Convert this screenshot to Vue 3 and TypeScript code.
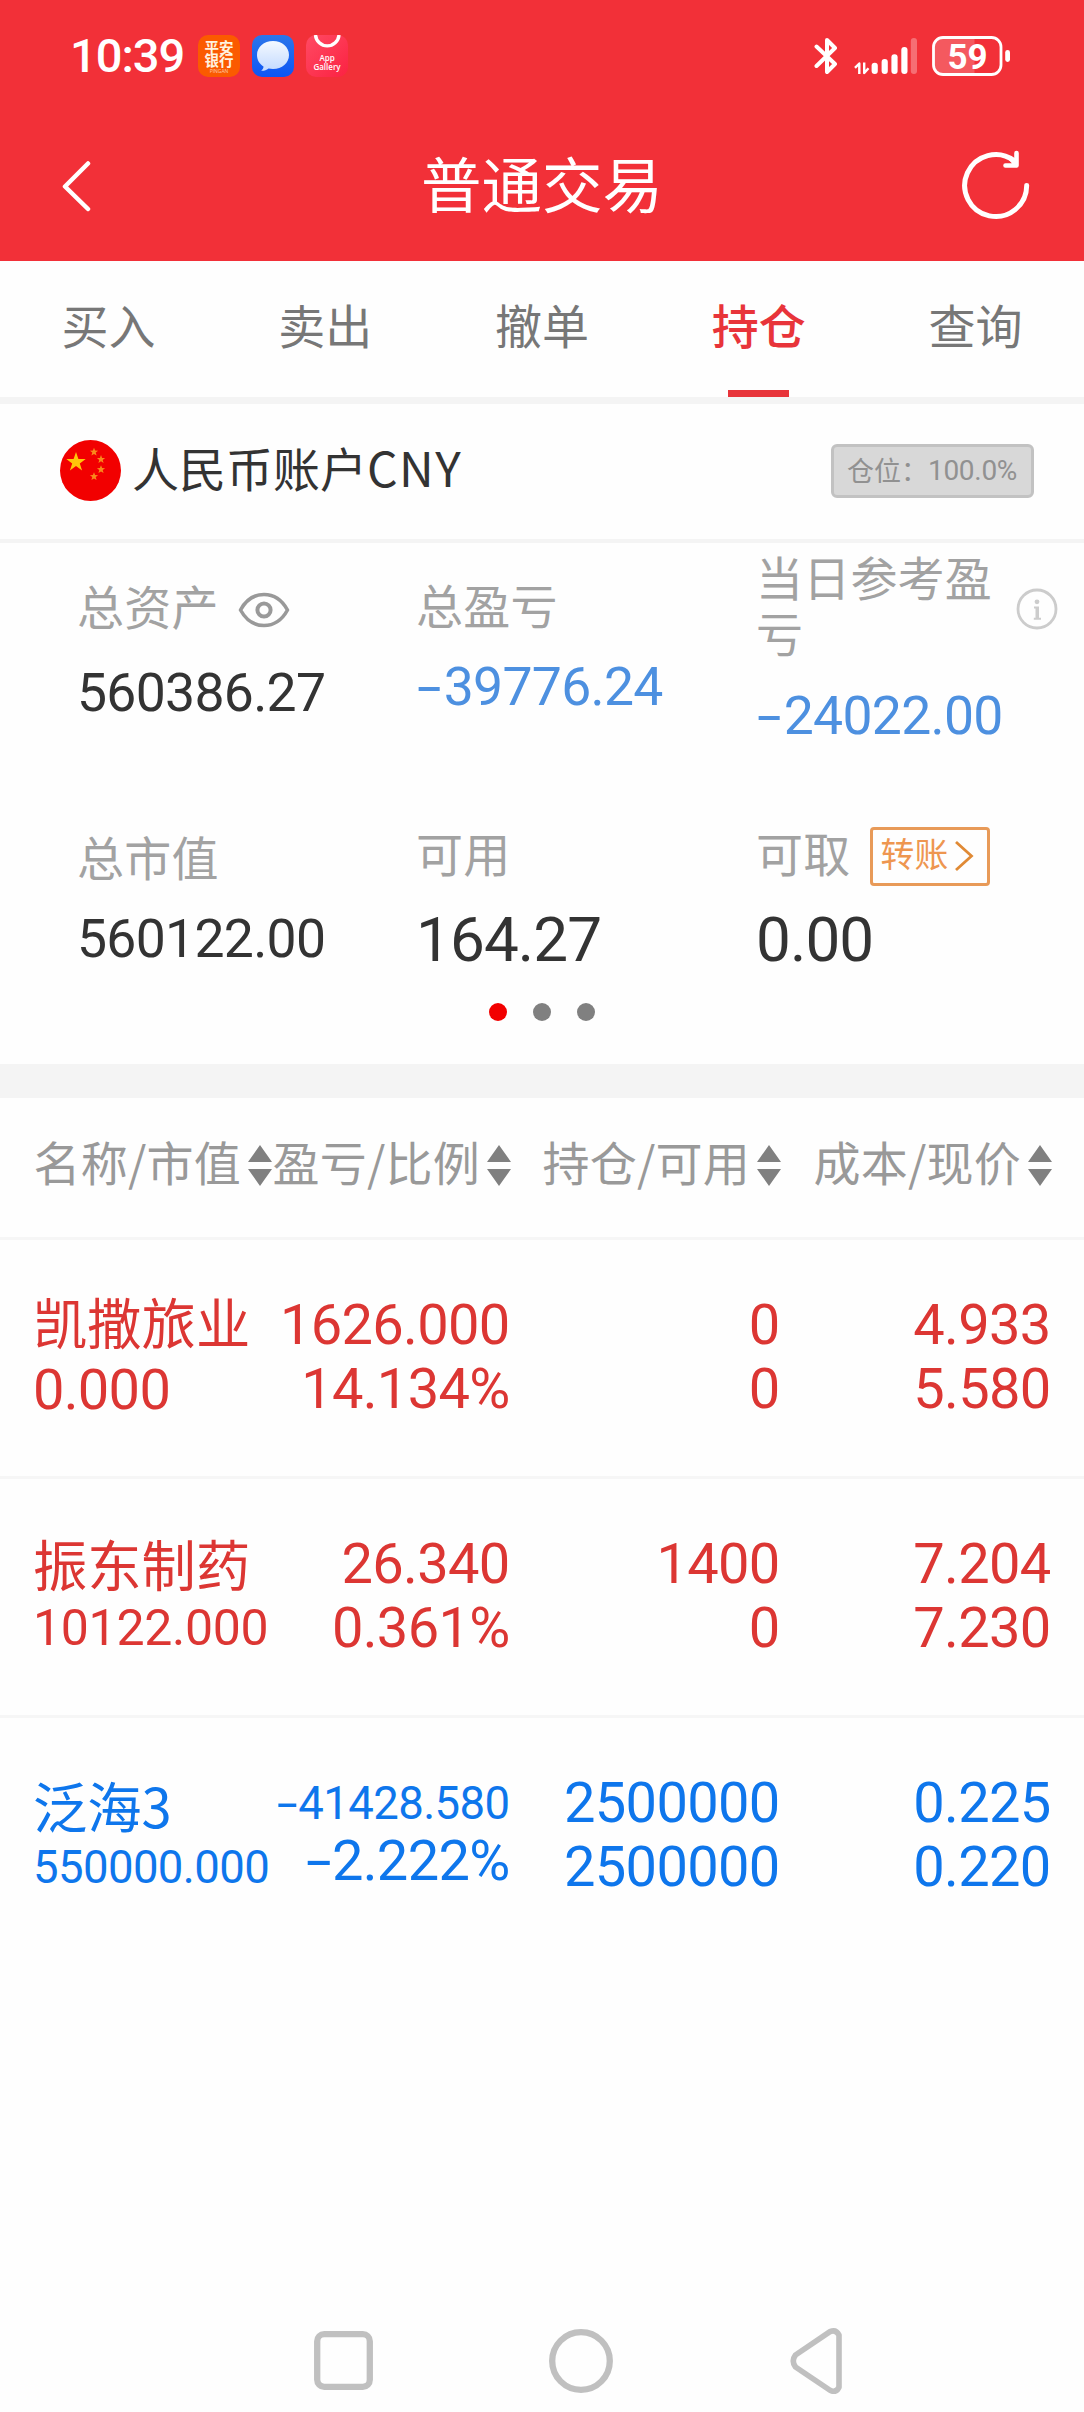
<script setup lang="ts">
interface Cell {
  text: string
  size: 'lg' | 'md' | 'sm'
}
interface Holding {
  name: string
  tone: 'up' | 'down'
  value: Cell
  pairs: [Cell, Cell][]
}

const tabs: string[] = ['买入', '卖出', '撤单', '持仓', '查询']
const activeTab = '持仓'
const columns: string[] = ['名称/市值', '盈亏/比例', '持仓/可用', '成本/现价']

const c = (text: string, size: Cell['size'] = 'lg'): Cell => ({ text, size })

const holdings: Holding[] = [
  {
    name: '凯撒旅业',
    tone: 'up',
    value: c('0.000'),
    pairs: [
      [c('1626.000'), c('14.134%')],
      [c('0'), c('0')],
      [c('4.933'), c('5.580')],
    ],
  },
  {
    name: '振东制药',
    tone: 'up',
    value: c('10122.000', 'md'),
    pairs: [
      [c('26.340'), c('0.361%')],
      [c('1400'), c('0')],
      [c('7.204'), c('7.230')],
    ],
  },
  {
    name: '泛海3',
    tone: 'down',
    value: c('550000.000', 'sm'),
    pairs: [
      [c('-41428.580', 'sm'), c('-2.222%')],
      [c('2500000'), c('2500000')],
      [c('0.225'), c('0.220')],
    ],
  },
]

const signal = [
  { x: 17.6, y: 25.7, o: 1 },
  { x: 27.6, y: 22, o: 1 },
  { x: 37.4, y: 17.3, o: 1 },
  { x: 47.3, y: 10, o: 1 },
  { x: 56.8, y: 1, o: 0.3 },
]

const isNegative = (t: string): boolean => t.startsWith('-')
const digits = (t: string): string => t.replace('-', '')
</script>

<template>
  <div class="screen">
    <header class="top">
      <div class="status">
        <span class="time">10:39</span>
        <svg class="app" width="42" height="42" viewBox="0 0 42 42">
          <rect width="42" height="42" rx="10" fill="#fb5a00" />
          <g fill="#fff3e0" text-anchor="middle">
            <text class="bank" x="21" y="17.500">平安</text>
            <text class="bank" x="21" y="31.300">银行</text>
            <text class="pinyin" x="21" y="38">PINGAN</text>
          </g>
        </svg>
        <svg class="app" width="42" height="42" viewBox="0 0 42 42">
          <defs>
            <linearGradient id="msg" x1="0" y1="0" x2="0" y2="1">
              <stop offset="0" stop-color="#2b76ea" />
              <stop offset="1" stop-color="#0d55f4" />
            </linearGradient>
            <linearGradient id="bubble" x1="0" y1="0" x2="0" y2="1">
              <stop offset="0" stop-color="#f4f9ff" />
              <stop offset="1" stop-color="#c3daff" />
            </linearGradient>
          </defs>
          <rect width="42" height="42" rx="10" fill="url(#msg)" />
          <path d="M21 6C12 6 5 12 5 20c0 5 2.500 9 6.500 11.500 0 1.800-.8 3-2.300 4.300 3 .2 5.200-.8 7.300-2.300 1.400.3 3 .5 4.500.5 9 0 16-6 16-14S30 6 21 6z" fill="url(#bubble)" />
        </svg>
        <svg class="app" width="42" height="42" viewBox="0 0 42 42">
          <defs>
            <linearGradient id="gallery" x1="0" y1="0" x2="1" y2="1">
              <stop offset="0" stop-color="#ff4a63" />
              <stop offset="1" stop-color="#fb2242" />
            </linearGradient>
          </defs>
          <rect width="42" height="42" rx="10" fill="url(#gallery)" />
          <path d="M9.500 0a11.800 12 0 0 0 23.500 0" fill="none" stroke="#fff" stroke-width="3.400" />
          <g fill="#fff" text-anchor="middle">
            <text class="gallery" x="21" y="26">App</text>
            <text class="gallery" x="21" y="35">Gallery</text>
          </g>
        </svg>
        <div class="system">
          <svg width="24" height="38" viewBox="0 0 24 38">
            <path d="M2.500 9.500 21 27 13 35V3l8 8L2.500 29" fill="none" stroke="#fff" stroke-width="4" stroke-linejoin="round" stroke-linecap="round" />
          </svg>
          <svg class="signal" width="64" height="38" viewBox="0 0 64 38">
            <path d="M5.300 37V26.500L1 30.800" fill="none" stroke="#fff" stroke-width="2.400" stroke-linejoin="round" />
            <path d="M10.200 25.500V36l4.300-4.800" fill="none" stroke="#fff" stroke-width="2.400" stroke-linejoin="round" />
            <rect v-for="b in signal" :key="b.x" :x="b.x" :y="b.y" width="6.200" :height="37 - b.y" rx="3" fill="#fff" :fill-opacity="b.o" />
          </svg>
          <svg class="battery" width="79" height="40" viewBox="0 0 79 40">
            <path d="M11 2h31.500v36H11a9.500 9.500 0 0 1-9.500-9.500v-17A9.500 9.500 0 0 1 11 2z" fill="#fff" fill-opacity=".2" />
            <rect x="1.500" y="1.500" width="67.500" height="37" rx="9.500" fill="none" stroke="#fff" stroke-width="2.800" />
            <rect x="73.200" y="14" width="4.800" height="12" rx="2.400" fill="#fff" />
            <text class="level" x="35.500" y="32.600" text-anchor="middle" fill="#fff">59</text>
          </svg>
        </div>
      </div>
      <div class="navbar">
        <svg class="back" width="30" height="52" viewBox="0 0 30 52">
          <path d="M27 3.500 4 26.500 27 49" fill="none" stroke="#fff" stroke-width="4.500" stroke-linecap="round" stroke-linejoin="round" />
        </svg>
        <h1>普通交易</h1>
        <svg class="refresh" width="68" height="70" viewBox="0 0 68 70">
          <path d="M64.700 35.500A31 31 0 1 1 52 10.500" fill="none" stroke="#fff" stroke-width="5" stroke-linecap="round" />
          <path d="M54.500 3v12.500H43.500M49 9l5 5.500" fill="none" stroke="#fff" stroke-width="4.600" stroke-linecap="round" stroke-linejoin="round" />
        </svg>
      </div>
    </header>

    <nav class="tabs">
      <div v-for="t in tabs" :key="t" class="tab" :class="{ active: t === activeTab }">{{ t }}</div>
    </nav>

    <section class="account">
      <svg width="61" height="61" viewBox="0 0 61 61">
        <circle cx="30.500" cy="30.500" r="30.500" fill="#f20000" />
        <path d="M16 12l2.400 7h7.300l-5.900 4.400 2.300 7.100-6.100-4.400-6.100 4.400 2.300-7.100L6.300 19h7.300z" fill="#ffc60a" />
        <g fill="#f98a1c">
          <path id="star" d="M34 7.800l1.100 2.800 3 .1-2.400 1.900.9 3-2.600-1.700-2.600 1.700.9-3-2.400-1.900 3-.1z" />
          <use href="#star" x="7" y="7.300" />
          <use href="#star" x="7" y="17.500" />
          <use href="#star" y="24.500" />
        </g>
      </svg>
      <span class="account-name">人民币账户<span class="code">CNY</span></span>
      <div class="position"><span>仓位：</span><b>100.0%</b></div>
    </section>

    <section class="summary">
      <div class="sum-row">
        <div class="cell first">
          <div class="label">总资产
            <svg class="eye" width="52" height="36" viewBox="0 0 52 36">
              <path d="M2.500 18C8 8 16 2.500 26 2.500S44 8 49.500 18C44 28 36 33.500 26 33.500S8 28 2.500 18z" fill="none" stroke="#999" stroke-width="3.600" stroke-linejoin="round" />
              <circle cx="26" cy="18" r="6.600" fill="none" stroke="#999" stroke-width="4" />
            </svg>
          </div>
          <div class="amount">560386.27</div>
        </div>
        <div class="cell">
          <div class="label">总盈亏</div>
          <div class="amount blue"><i class="minus">-</i>39776.24</div>
        </div>
        <div class="cell">
          <div class="label today">
            <span>当日参考盈亏</span>
            <svg class="info" width="42" height="42" viewBox="0 0 42 42">
              <circle cx="21" cy="21" r="19" fill="none" stroke="#ccc" stroke-width="2.800" />
              <circle cx="21" cy="13.800" r="2.400" fill="#ccc" />
              <path d="M18 18.500h5v11.300h2v1.900h-7.200v-1.900h1.700v-9.400H18z" fill="#ccc" />
            </svg>
          </div>
          <div class="amount blue"><i class="minus">-</i>24022.00</div>
        </div>
      </div>
      <div class="sum-row second">
        <div class="cell">
          <div class="label low">总市值</div>
          <div class="amount">560122.00</div>
        </div>
        <div class="cell">
          <div class="label">可用</div>
          <div class="amount big">164.27</div>
        </div>
        <div class="cell">
          <div class="label">可取
            <span class="transfer">转账
              <svg width="20" height="32" viewBox="0 0 20 32">
                <path d="M2 2l15.500 14L2 30" fill="none" stroke="#e08a35" stroke-width="2.800" />
              </svg>
            </span>
          </div>
          <div class="amount big">0.00</div>
        </div>
      </div>
      <div class="dots"><i class="on"></i><i></i><i></i></div>
    </section>

    <section class="table">
      <div class="thead">
        <div v-for="h in columns" :key="h" class="th">
          <span>{{ h }}</span>
          <svg width="24" height="41" viewBox="0 0 24 41">
            <path d="M12 0l12 17H0zM12 41L0 24h24z" fill="#808080" />
          </svg>
        </div>
      </div>
      <div v-for="h in holdings" :key="h.name" class="row" :class="h.tone">
        <div class="td left">
          <div class="name">{{ h.name }}</div>
          <div :class="h.value.size">{{ h.value.text }}</div>
        </div>
        <div v-for="(p, i) in h.pairs" :key="i" class="td">
          <div v-for="(v, j) in p" :key="j" :class="v.size"><i v-if="isNegative(v.text)" class="minus">-</i>{{ digits(v.text) }}</div>
        </div>
      </div>
    </section>

    <footer class="keys">
      <svg width="530" height="68" viewBox="0 0 530 68" fill="none" stroke="#c0c0c0" stroke-width="6.300">
        <rect x="4.200" y="8.200" width="52.600" height="52.600" rx="7" />
        <circle cx="268" cy="35" r="28.800" />
        <path d="M517 5.600 482.500 29q-4.500 6 0 12L517 64.300q6 3 9-3V9q-3-6-9-3.400z" stroke-width="5.600" stroke-linejoin="round" />
      </svg>
    </footer>
  </div>
</template>

<style>
body {
  margin: 0;
  background: #fefefe;
}
</style>

<style scoped>
.screen {
  width: 1084px;
  height: 2412px;
  display: flex;
  flex-direction: column;
  background: #fefefe;
  color: #333;
  font-family: 'Noto Sans CJK SC', sans-serif;
  overflow: hidden;
}
.top {
  height: 261px;
  background: #f23038;
  color: #fff;
}
.status {
  height: 112px;
  display: flex;
  align-items: center;
  padding: 0 73px 0 70px;
  box-sizing: border-box;
}
.time {
  width: 116px;
  margin-right: 12px;
  font: 500 47px/60px Roboto, sans-serif;
  letter-spacing: -1px;
  white-space: nowrap;
}
.app {
  margin-right: 12px;
}
.bank {
  font: 700 14.500px 'Noto Sans CJK SC', sans-serif;
}
.pinyin {
  font: 5px 'Open Sans', sans-serif;
  opacity: 0.7;
}
.gallery {
  font: 600 8px 'Open Sans', sans-serif;
}
.level {
  font: 700 35px Roboto, sans-serif;
}
.system {
  display: flex;
  align-items: center;
  margin-left: auto;
}
.signal {
  margin: 0 14px 0 16px;
}
.navbar {
  height: 149px;
  display: grid;
  grid-template-columns: 360px 242px 1fr;
  align-items: center;
  padding: 0 54px 0 61px;
}
h1 {
  margin: 0 0 10px;
  font-weight: 400;
  font-size: 60.500px;
  line-height: 88px;
  white-space: nowrap;
}
.refresh {
  width: 68px;
  justify-self: end;
  margin-bottom: 4px;
}
.back {
  margin-bottom: 1px;
}
.tabs {
  height: 136px;
  display: flex;
  border-bottom: 7px solid #f4f4f4;
}
.tab {
  flex: 1;
  display: flex;
  flex-direction: column;
  align-items: center;
  height: 136px;
  line-height: 126px;
  font-size: 47px;
  color: #777;
}
.tab.active {
  color: #e8343a;
  font-weight: 500;
}
.tab.active::after {
  content: '';
  width: 61px;
  height: 7px;
  margin-top: 3px;
  background: #e8343a;
}
.account {
  height: 135px;
  display: flex;
  align-items: center;
  padding: 0 50px 0 60px;
  border-bottom: 4px solid #f4f4f4;
}
.account > svg {
  margin-bottom: 2px;
}
.account-name {
  margin: 0 auto 10px 11px;
  font-size: 47px;
  line-height: 60px;
}
.code {
  font-size: 48px;
  letter-spacing: 1.5px;
}
.position {
  width: 203px;
  height: 54px;
  box-sizing: border-box;
  border: 3px solid #c2c2c2;
  border-radius: 6px;
  background: #d8d8d8;
  color: #919191;
  display: flex;
  align-items: center;
  padding-left: 13px;
  margin-bottom: 1px;
  font-size: 27px;
  line-height: 44px;
}
.position span {
  margin-bottom: 3px;
}
.position b {
  font: 400 28px/44px Roboto, sans-serif;
  letter-spacing: -0.3px;
  margin-bottom: 1px;
}
.summary {
  height: 521px;
  border-bottom: 34px solid #f4f4f4;
}
.sum-row {
  height: 206px;
  display: grid;
  grid-template-columns: 339px 340px 1fr;
  align-items: center;
  padding-left: 77px;
}
.sum-row.second {
  margin-top: 45px;
}
.cell {
  padding-top: 1px;
}
.cell.first {
  padding-top: 8px;
}
.first .amount {
  margin-top: 30px;
}
.label {
  display: flex;
  align-items: center;
  height: 56px;
  line-height: 56.500px;
  font-size: 47px;
  letter-spacing: 0.2px;
  color: #a2a2a2;
}
.label.low {
  padding-top: 2px;
}
.today {
  height: 113px;
}
.today span {
  width: 237px;
}
.info {
  margin-left: 23px;
  margin-top: 9px;
}
.eye {
  margin-left: 19px;
  margin-top: 10px;
}
.amount {
  margin-top: 25px;
  height: 60px;
  font: 400 53.500px/60px Roboto, sans-serif;
  letter-spacing: -0.7px;
  white-space: nowrap;
}
.amount.big {
  margin-top: 30px;
  font-size: 62px;
  letter-spacing: -0.9px;
}
.second .label:not(.low) {
  margin-top: -1px;
}
.blue {
  color: #4d90e0;
  padding-left: 1px;
}
.minus {
  display: inline-block;
  font-style: normal;
  width: 0.5em;
  text-align: left;
  transform: scaleX(1.65);
  transform-origin: left center;
}
.td .minus {
  width: 0.47em;
}
.transfer {
  display: flex;
  align-items: center;
  justify-content: space-between;
  box-sizing: border-box;
  width: 120px;
  height: 59px;
  margin: 8px 0 0 20px;
  padding: 0 13px 6px 7px;
  border: 3px solid #e89a58;
  border-radius: 4px;
  color: #ee9650;
  font-size: 33.800px;
  line-height: 50px;
}
.transfer svg {
  margin-top: 5px;
}
.dots {
  display: flex;
  justify-content: center;
  gap: 26px;
  margin-top: 3px;
}
.dots i {
  width: 18px;
  height: 18px;
  border-radius: 50%;
  background: #808080;
}
.dots .on {
  background: #f20000;
}
.thead,
.row {
  display: grid;
  grid-template-columns: 239px 239px 270px 271px;
  padding: 0 32px 0 33px;
  border-bottom: 3px solid #f6f6f6;
}
.thead {
  height: 139px;
}
.th {
  display: flex;
  align-items: center;
  justify-content: flex-end;
  gap: 7px;
  height: 134px;
  font-size: 47px;
  line-height: 60px;
  color: #999;
  white-space: nowrap;
}
.th span {
  letter-spacing: 0.2px;
  margin-bottom: 8px;
}
.row {
  height: 236px;
  align-items: center;
}
.row:last-child {
  border-bottom: 0;
}
.td {
  text-align: right;
  padding: 0 1.500px 2px 0;
  white-space: nowrap;
}
.td.left {
  text-align: left;
  padding-bottom: 3px;
}
.name {
  padding-bottom: 8px;
  font-size: 54.300px;
  line-height: 58px;
}
.lg,
.md,
.sm {
  font: 400 56px/64px Roboto, sans-serif;
  letter-spacing: -0.7px;
}
.md {
  font-size: 50px;
  line-height: 56.500px;
  letter-spacing: -0.3px;
}
.sm {
  font-size: 45.500px;
  line-height: 51px;
  letter-spacing: -0.6px;
}
.up {
  color: #dc3633;
}
.down {
  color: #0e76ec;
}
.keys {
  margin-top: auto;
  height: 86px;
  padding-left: 313px;
}
</style>
